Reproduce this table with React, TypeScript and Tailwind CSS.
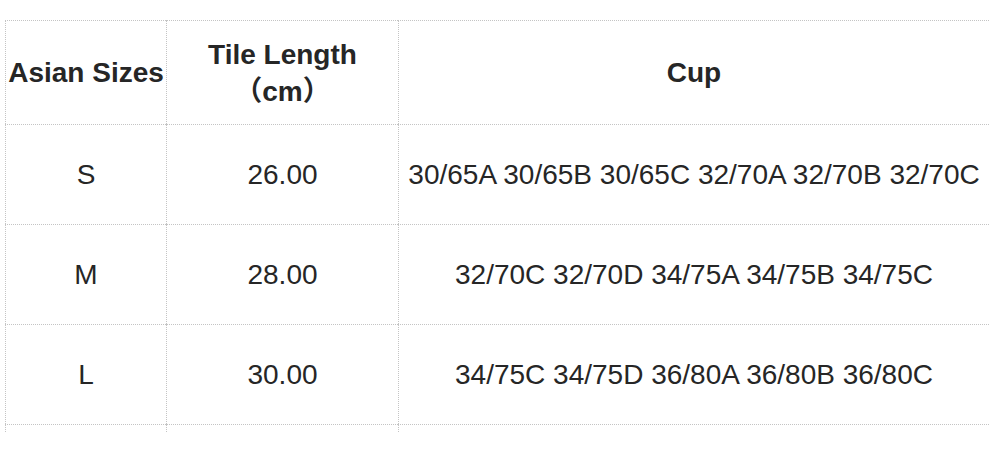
import React from "react";

const rows = [
    { size: "S", length: "26.00", cup: "30/65A 30/65B 30/65C 32/70A 32/70B 32/70C" },
    { size: "M", length: "28.00", cup: "32/70C 32/70D 34/75A 34/75B 34/75C" },
    { size: "L", length: "30.00", cup: "34/75C 34/75D 36/80A 36/80B 36/80C" },
];

const cell = "border-t border-l border-dotted border-[#c4c4c4] flex items-center justify-center text-center";

export default function App() {
    return (
        <div
            className="w-[989px] h-[456px] bg-white overflow-hidden text-[#262626]"
            style={{ fontFamily: '"Liberation Sans", Arial, "Noto Sans CJK SC", sans-serif' }}
        >
            <div className="pt-[20px] pl-[5px] grid grid-cols-[161px_232px_591px]">
                {/* Header */}
                <div className={`${cell} h-[104px] text-[28px] font-bold whitespace-nowrap`}>Asian Sizes</div>
                <div className={`${cell} h-[104px] text-[28px] font-bold leading-[37px] flex-col`}>
                    <span>Tile Length</span>
                    <span>（cm）</span>
                </div>
                <div className={`${cell} h-[104px] text-[28px] font-bold`}>Cup</div>

                {/* Rows */}
                {rows.map((r) => (
                    <React.Fragment key={r.size}>
                        <div className={`${cell} h-[100px] text-[28px]`}>{r.size}</div>
                        <div className={`${cell} h-[100px] text-[28px]`}>{r.length}</div>
                        <div className={`${cell} h-[100px] text-[28px] whitespace-nowrap`}>{r.cup}</div>
                    </React.Fragment>
                ))}

                {/* cut-off row */}
                <div className={`${cell} h-[8px]`} />
                <div className={`${cell} h-[8px]`} />
                <div className={`${cell} h-[8px]`} />
            </div>
        </div>
    );
}
